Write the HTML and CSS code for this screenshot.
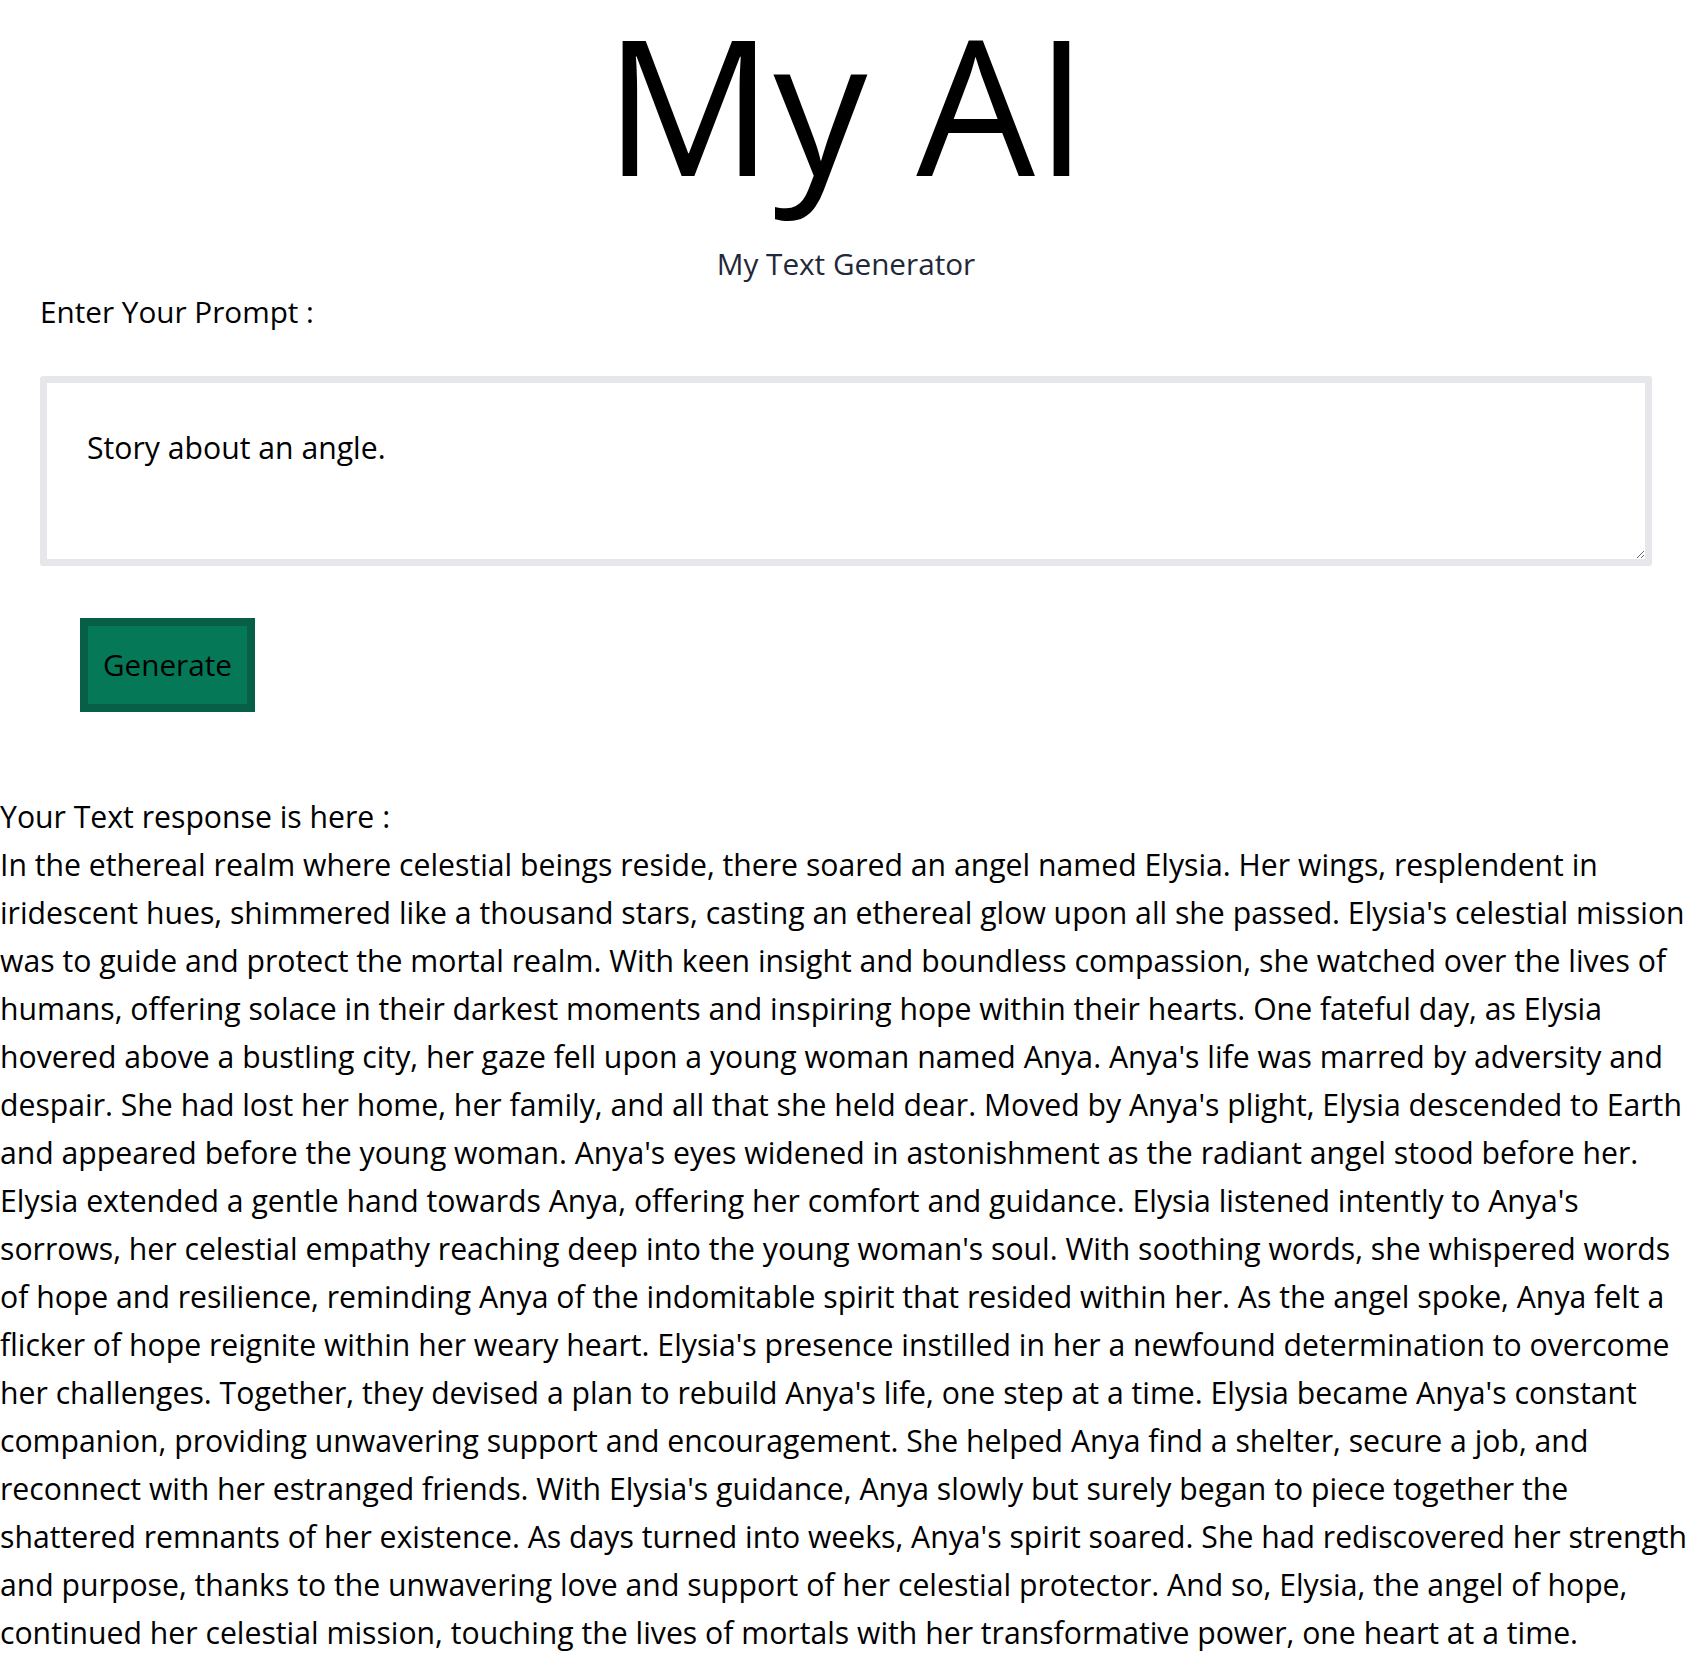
FILE: index.html
```html
<!DOCTYPE html>
<html lang="en">
<head>
<meta charset="utf-8">
<title>My AI</title>
<link rel="stylesheet" href="styles.css">
</head>
<body>
<header class="hero">
  <h1 class="title">My AI</h1>
  <p class="subtitle">My Text Generator</p>
</header>
<main class="form">
  <label class="prompt-label" for="prompt">Enter Your Prompt :</label>
  <textarea id="prompt" class="prompt">Story about an angle.</textarea>
  <button class="generate" type="button">Generate</button>
</main>
<section class="response">
  <p class="response-text">Your Text response is here :<br>In the ethereal realm where celestial beings reside, there soared an angel named Elysia. Her wings, resplendent in<br>iridescent hues, shimmered like a thousand stars, casting an ethereal glow upon all she passed. Elysia's celestial mission<br>was to guide and protect the mortal realm. With keen insight and boundless compassion, she watched over the lives of<br>humans, offering solace in their darkest moments and inspiring hope within their hearts. One fateful day, as Elysia<br>hovered above a bustling city, her gaze fell upon a young woman named Anya. Anya's life was marred by adversity and<br>despair. She had lost her home, her family, and all that she held dear. Moved by Anya's plight, Elysia descended to Earth<br>and appeared before the young woman. Anya's eyes widened in astonishment as the radiant angel stood before her.<br>Elysia extended a gentle hand towards Anya, offering her comfort and guidance. Elysia listened intently to Anya's<br>sorrows, her celestial empathy reaching deep into the young woman's soul. With soothing words, she whispered words<br>of hope and resilience, reminding Anya of the indomitable spirit that resided within her. As the angel spoke, Anya felt a<br>flicker of hope reignite within her weary heart. Elysia's presence instilled in her a newfound determination to overcome<br>her challenges. Together, they devised a plan to rebuild Anya's life, one step at a time. Elysia became Anya's constant<br>companion, providing unwavering support and encouragement. She helped Anya find a shelter, secure a job, and<br>reconnect with her estranged friends. With Elysia's guidance, Anya slowly but surely began to piece together the<br>shattered remnants of her existence. As days turned into weeks, Anya's spirit soared. She had rediscovered her strength<br>and purpose, thanks to the unwavering love and support of her celestial protector. And so, Elysia, the angel of hope,<br>continued her celestial mission, touching the lives of mortals with her transformative power, one heart at a time.</p>
</section>
</body>
</html>
```

FILE: styles.css
```css
html, body {
  margin: 0;
  padding: 0;
  background: #ffffff;
}

body {
  font-family: "Open Sans", "Noto Sans", "Liberation Sans", sans-serif;
  color: #000000;
  overflow: hidden;
}

.hero {
  display: flex;
  flex-direction: column;
  align-items: center;
}

.title {
  margin: 0;
  font-size: 188px;
  font-weight: 400;
  line-height: 206px;
}

.subtitle {
  margin: 34px 0 0;
  font-size: 29.7px;
  line-height: 48px;
  color: #1f2937;
}

.form {
  display: flex;
  flex-direction: column;
  align-items: flex-start;
}

.prompt-label {
  margin-left: 40px;
  font-size: 29.7px;
  line-height: 48px;
}

.prompt {
  box-sizing: border-box;
  display: block;
  margin: 40px 0 0 40px;
  width: 1612px;
  height: 190px;
  padding: 41px 40px;
  border: 7px solid #e5e7eb;
  border-radius: 3px;
  font-family: inherit;
  font-size: 30.2px;
  line-height: 48px;
  color: #000000;
  background: #ffffff;
  outline: none;
}

.generate {
  box-sizing: border-box;
  margin: 52px 0 0 80px;
  width: 175px;
  height: 94px;
  padding: 0;
  border: 8px solid #065f46;
  background: #047857;
  font-family: inherit;
  font-size: 29.7px;
  line-height: 48px;
  color: #000000;
}

.response {
  margin-top: 81px;
}

.response-text {
  margin: 0;
  font-size: 30.2px;
  line-height: 48px;
  white-space: nowrap;
}
```
